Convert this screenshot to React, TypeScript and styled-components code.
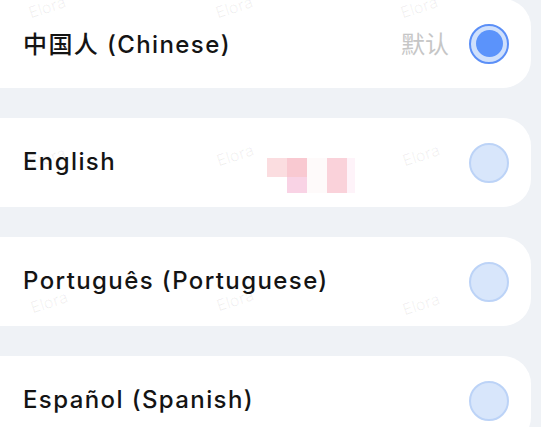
import React from "react";
import styled, { createGlobalStyle } from "styled-components";

const Global = createGlobalStyle`
  html, body { margin: 0; padding: 0; background: #eff2f6; }
  body { font-family: Inter, "Noto Sans CJK SC", sans-serif; overflow: hidden; }
`;

const Page = styled.div`
  position: relative;
  width: 541px;
  height: 427px;
  overflow: hidden;
  background: #eff2f6;
`;

const List = styled.div`
  display: flex;
  flex-direction: column;
  gap: 30px;
  margin-top: -1px;
  margin-left: -30px;
  width: 561px;
`;

const Card = styled.div`
  height: 89px;
  background: #ffffff;
  border-radius: 28px;
  display: flex;
  align-items: center;
  padding: 0 22px 0 53px;
  box-sizing: border-box;
`;

const Label = styled.div`
  flex: 1;
  font-family: Inter, "Noto Sans CJK SC", sans-serif;
  font-size: 24px;
  font-weight: 500;
  color: #141414;
  letter-spacing: 1.4px;
  padding-bottom: 3px;
`;

const Default = styled.span`
  font-size: 24px;
  color: #c6c6c6;
  margin-right: 20px;
  padding-bottom: 3px;
  font-family: "Noto Sans CJK SC", sans-serif;
`;

const Radio = styled.div<{ $on?: boolean }>`
  width: 40px;
  height: 40px;
  border-radius: 50%;
  box-sizing: border-box;
  border: 2px solid ${(p) => (p.$on ? "#5b8ff7" : "#bcd3f7")};
  background: ${(p) => (p.$on ? "#cfe0fc" : "#d8e6fb")};
  display: flex;
  align-items: center;
  justify-content: center;
`;

const Dot = styled.div`
  width: 27px;
  height: 27px;
  border-radius: 50%;
  background: #5b93fb;
`;

const Mark = styled.span`
  position: absolute;
  font-size: 16px;
  color: rgba(0, 0, 0, 0.06);
  transform: rotate(-18deg);
  pointer-events: none;
`;

const Pixel = styled.div`
  position: absolute;
`;

const marks = [
  [28, -3], [215, -3], [400, -3],
  [216, 145], [402, 145], [28, 148],
  [30, 292], [216, 290], [402, 294],
];

const pixels = [
  { x: 267, y: 158, w: 20, h: 19, c: "#fbdde0" },
  { x: 287, y: 158, w: 20, h: 19, c: "#f9c9d1" },
  { x: 287, y: 177, w: 20, h: 16, c: "#f9d3e5" },
  { x: 307, y: 158, w: 20, h: 35, c: "#fefafa" },
  { x: 327, y: 158, w: 20, h: 35, c: "#fad2da" },
  { x: 347, y: 158, w: 8, h: 35, c: "#fef3f9" },
];

const langs = [
  { name: "中国人 (Chinese)", on: true, def: true },
  { name: "English" },
  { name: "Português (Portuguese)" },
  { name: "Español (Spanish)" },
];

export default function App() {
  return (
    <Page>
      <Global />
      <List>
        {langs.map((l) => (
          <Card key={l.name}>
            <Label>{l.name}</Label>
            {l.def && <Default>默认</Default>}
            <Radio $on={l.on}>{l.on && <Dot />}</Radio>
          </Card>
        ))}
      </List>
      {pixels.map((p, i) => (
        <Pixel key={i} style={{ left: p.x, top: p.y, width: p.w, height: p.h, background: p.c }} />
      ))}
      {marks.map(([x, y], i) => (
        <Mark key={i} style={{ left: x, top: y }}>Elora</Mark>
      ))}
    </Page>
  );
}
